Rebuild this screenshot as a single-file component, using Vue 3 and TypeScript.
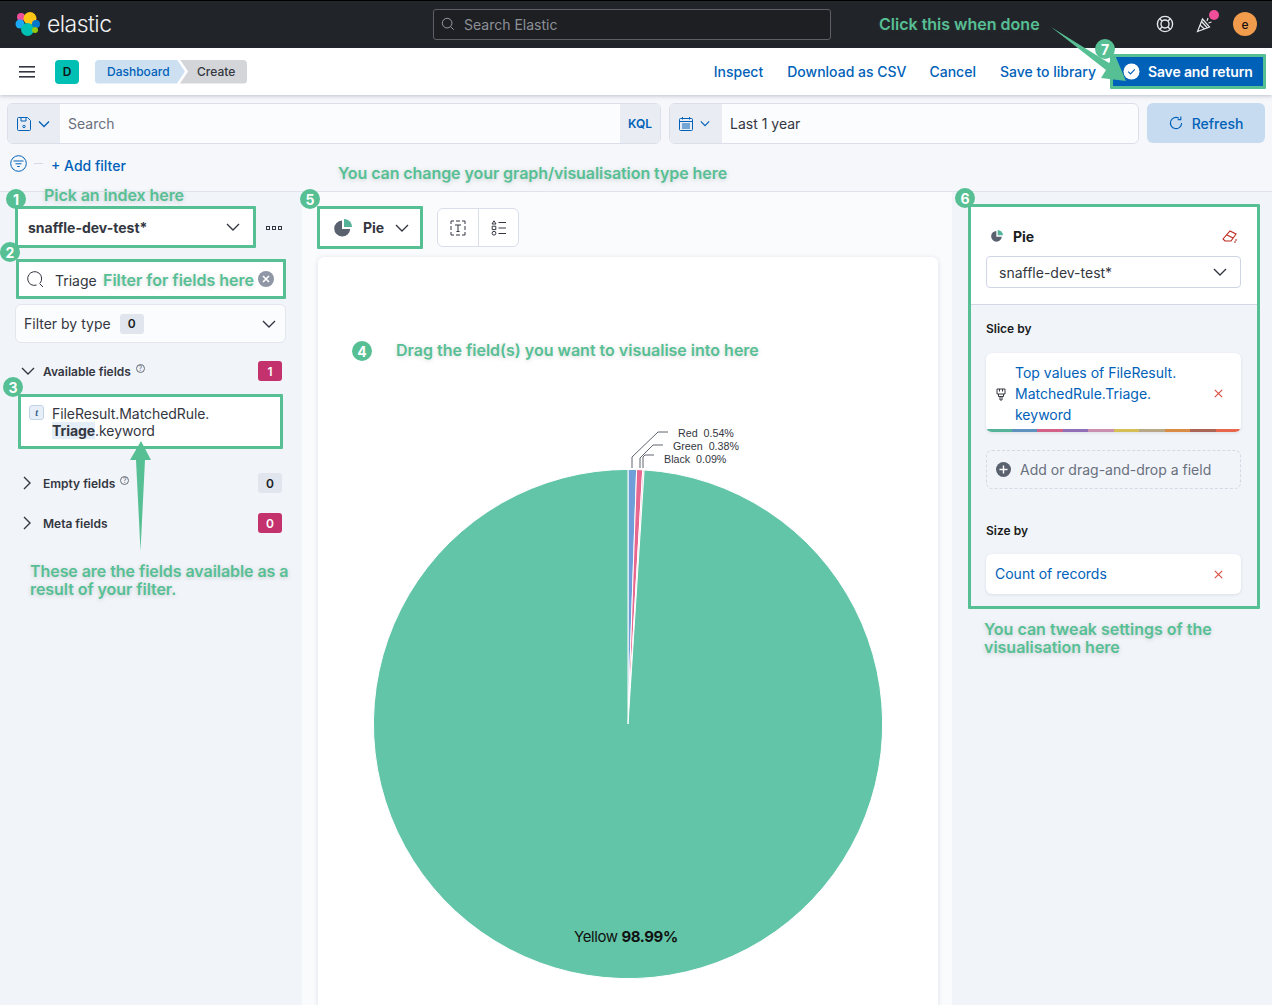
<script setup lang="ts">
interface Slice {
  label: string
  share: number
  color: string
}

interface Badge {
  no: number
  x: number
  y: number
}

// pie data, clockwise from 12 o'clock
const slices: Slice[] = [
  { label: 'Red', share: 0.54, color: '#6f9fd8' },
  { label: 'Green', share: 0.38, color: '#e8678f' },
  { label: 'Black', share: 0.09, color: '#d9a0c0' },
  { label: 'Yellow', share: 98.99, color: '#62c5a7' }
]

const cx = 310
const cy = 467
const r = 254.6

function point(pct: number): string {
  const a = (pct / 100) * Math.PI * 2
  return `${(cx + r * Math.sin(a)).toFixed(2)} ${(cy - r * Math.cos(a)).toFixed(2)}`
}

let run = 0
const arcs = slices.map((s) => {
  const from = run
  run += s.share
  const large = s.share > 50 ? 1 : 0
  return {
    color: s.color,
    d: `M${cx} ${cy} L${point(from)} A${r} ${r} 0 ${large} 1 ${point(run)} Z`
  }
})

const badges: Badge[] = [
  { no: 1, x: 16, y: 199 },
  { no: 2, x: 10, y: 252 },
  { no: 3, x: 13, y: 387 },
  { no: 4, x: 362, y: 351 },
  { no: 5, x: 310, y: 199 },
  { no: 6, x: 965, y: 198 },
  { no: 7, x: 1105, y: 49 }
]

const sliceColors = ['#54b399', '#6092c0', '#d36086', '#9170b8', '#ca8eae', '#d6bf57', '#b9a888', '#da8b45', '#aa6556', '#e7664c']
</script>

<template>
  <div class="page">
    <header class="top">
      <div class="brand">
        <svg width="26" height="26" viewBox="0 0 26 26">
          <circle cx="6" cy="6" r="4" fill="#f04e98" />
          <circle cx="15" cy="7.5" r="6.5" fill="#fec514" />
          <circle cx="5" cy="13" r="4.5" fill="#1ba9f5" />
          <circle cx="21" cy="13" r="4" fill="#0077cc" />
          <circle cx="12.5" cy="18.5" r="6.5" fill="#00bfb3" />
          <circle cx="20" cy="19" r="3" fill="#93c90e" />
        </svg>
        <span class="wordmark">elastic</span>
      </div>
      <div class="global-search">
        <svg width="14" height="14" viewBox="0 0 16 16" fill="none" stroke="#9a9da3" stroke-width="1.1">
          <circle cx="7" cy="7" r="5.5" />
          <path d="M11 11l3.5 3.5" />
        </svg>
        <span>Search Elastic</span>
      </div>
      <div class="top-icons">
        <svg width="18" height="18" viewBox="0 0 18 18" fill="none" stroke="#e6e8ea" stroke-width="1.4">
          <circle cx="9" cy="9" r="7.6" />
          <circle cx="9" cy="9" r="4" />
          <path d="M3.6 3.6l2.6 2.6M14.4 3.6l-2.6 2.6M3.6 14.4l2.6-2.6M14.4 14.4l-2.6-2.6" />
        </svg>
        <div class="news">
          <svg width="18" height="18" viewBox="0 0 18 18" fill="none" stroke="#e6e8ea" stroke-width="1.2">
            <path d="M1.5 16.5L6.5 4l7 8z" />
            <path d="M4 10l4.5 4M5.5 6.5l6 6.5M12 3l-1 3M15.5 7l-3 1" />
          </svg>
          <i class="news-dot"></i>
        </div>
        <span class="avatar">e</span>
      </div>
    </header>

    <nav class="bar">
      <svg class="burger" width="16" height="12" viewBox="0 0 16 12" fill="#343741">
        <rect y="0" width="16" height="1.6" />
        <rect y="5" width="16" height="1.6" />
        <rect y="10" width="16" height="1.6" />
      </svg>
      <span class="space">D</span>
      <div class="crumbs">
        <span class="crumb first">Dashboard</span>
        <span class="crumb last">Create</span>
      </div>
      <div class="bar-links">
        <a>Inspect</a>
        <a>Download as CSV</a>
        <a class="cancel">Cancel</a>
        <a>Save to library</a>
      </div>
      <button class="save marked">
        <svg width="17" height="17" viewBox="0 0 17 17">
          <circle cx="8.5" cy="8.5" r="8" fill="#fff" />
          <path d="M5.2 8.7l2.3 2.3 4.3-4.6" fill="none" stroke="#0061b8" stroke-width="1.1" />
        </svg>
        Save and return
      </button>
    </nav>

    <section class="query">
      <div class="search">
        <div class="saved">
          <svg width="14" height="14" viewBox="0 0 14 14" fill="none" stroke="#0061b8" stroke-width="1">
            <path d="M.5 1.5a1 1 0 011-1h9l3 3v9a1 1 0 01-1 1h-11a1 1 0 01-1-1z" />
            <path d="M4 .5v3.5h5V.5" />
            <circle cx="7" cy="9.5" r="1.2" />
          </svg>
          <svg width="12" height="8" viewBox="0 0 12 8" fill="none" stroke="#0061b8" stroke-width="1.3">
            <path d="M1 1.5l5 5 5-5" />
          </svg>
        </div>
        <span class="search-text">Search</span>
        <span class="kql">KQL</span>
      </div>
      <div class="date">
        <div class="date-pick">
          <svg width="14" height="14" viewBox="0 0 14 14" fill="none" stroke="#0061b8" stroke-width="1">
            <rect x=".5" y="1.5" width="13" height="12" rx="1" />
            <path d="M.5 4.5h13M3.5 0v2.5M10.5 0v2.5M3 7h8M3 9h8M3 11h8" />
          </svg>
          <svg width="10" height="7" viewBox="0 0 12 8" fill="none" stroke="#0061b8" stroke-width="1.4">
            <path d="M1 1.5l5 5 5-5" />
          </svg>
        </div>
        <span class="date-text">Last 1 year</span>
      </div>
      <button class="refresh">
        <svg width="14" height="14" viewBox="0 0 14 14" fill="none" stroke="#0061b8" stroke-width="1.1">
          <path d="M9.8 2.2A5.6 5.6 0 1012.6 7" />
          <path d="M11.8 .6v3H8.8" />
        </svg>
        Refresh
      </button>
    </section>

    <section class="filters">
      <svg width="17" height="17" viewBox="0 0 17 17" fill="none" stroke="#0061b8" stroke-width="1">
        <circle cx="8.5" cy="8.5" r="7.8" />
        <path d="M3.5 6h10M5.5 8.8h6M7.2 11.5h2.6" />
      </svg>
      <i class="filter-dash"></i>
      <a class="add-filter">+ Add filter</a>
    </section>

    <main class="work">
      <aside class="fields">
        <div class="index marked">
          <b>snaffle-dev-test*</b>
          <svg width="14" height="8" viewBox="0 0 14 8" fill="none" stroke="#343741" stroke-width="1.4">
            <path d="M1 1l6 6 6-6" />
          </svg>
          <span class="dots"><i></i><i></i><i></i></span>
        </div>
        <div class="field-search marked">
          <svg width="18" height="18" viewBox="0 0 18 18" fill="none" stroke="#343741" stroke-width="1">
            <path d="M14 13.2A7 7 0 105 14.6a7 7 0 005.6.4" />
            <path d="M13.5 13.5l3.5 3.5" />
          </svg>
          <span class="typed">Triage</span>
          <span class="clear">
            <svg width="8" height="8" viewBox="0 0 8 8" stroke="#fff" stroke-width="1.6"><path d="M1 1l6 6M7 1L1 7" /></svg>
          </span>
        </div>
        <div class="type-filter">
          <span>Filter by type</span>
          <span class="count grey wide">0</span>
          <svg width="14" height="8" viewBox="0 0 14 8" fill="none" stroke="#343741" stroke-width="1.4">
            <path d="M1 1l6 6 6-6" />
          </svg>
        </div>
        <div class="group available">
          <svg width="14" height="8" viewBox="0 0 14 8" fill="none" stroke="#343741" stroke-width="1.4">
            <path d="M1 1l6 6 6-6" />
          </svg>
          <b>Available fields</b>
          <span class="help">?</span>
          <span class="count pink">1</span>
        </div>
        <div class="field marked">
          <span class="token">t</span>
          <span class="field-name">FileResult.MatchedRule.<br /><mark>Triage</mark>.keyword</span>
        </div>
        <div class="group empty">
          <svg width="8" height="14" viewBox="0 0 8 14" fill="none" stroke="#343741" stroke-width="1.4">
            <path d="M1 1l6 6-6 6" />
          </svg>
          <b>Empty fields</b>
          <span class="help">?</span>
          <span class="count grey">0</span>
        </div>
        <div class="group meta">
          <svg width="8" height="14" viewBox="0 0 8 14" fill="none" stroke="#343741" stroke-width="1.4">
            <path d="M1 1l6 6-6 6" />
          </svg>
          <b>Meta fields</b>
          <span class="count pink">0</span>
        </div>
      </aside>

      <section class="center">
        <div class="tools">
          <div class="chart-type marked">
            <svg width="18" height="18" viewBox="0 0 18 18">
              <path d="M8 1.5a8 8 0 108.2 8.5H8z" fill="#5a6270" />
              <path d="M10 0a8 8 0 018 8h-8z" fill="#54b399" />
            </svg>
            <b>Pie</b>
            <svg width="14" height="8" viewBox="0 0 14 8" fill="none" stroke="#343741" stroke-width="1.4">
              <path d="M1 1l6 6 6-6" />
            </svg>
          </div>
          <div class="tool-group">
            <span class="tool">
              <svg width="16" height="16" viewBox="0 0 16 16" fill="none" stroke="#343741" stroke-width="1">
                <path d="M1 4V1h3M6 1h4M12 1h3v3M15 6v4M15 12v3h-3M10 15H6M4 15H1v-3M1 10V6" />
                <path d="M5 5h6M8 5v6.5M6.5 11.5h3" />
              </svg>
            </span>
            <span class="tool">
              <svg width="16" height="16" viewBox="0 0 16 16" fill="none" stroke="#343741" stroke-width="1">
                <path d="M3 .8L5 4H1zM1.2 6.2h3.6v3.4H1.2z" />
                <circle cx="3" cy="13.2" r="1.9" />
                <path d="M7.5 2.5H15M7.5 8H15M7.5 13.5H15" />
              </svg>
            </span>
          </div>
        </div>
        <div class="canvas">
          <svg class="chart" width="620" height="748" viewBox="0 0 620 748">
            <path v-for="a in arcs" :key="a.color" :d="a.d" :fill="a.color" stroke="#fff" stroke-width="1" />
            <g fill="none" stroke="#5f6670" stroke-width="1">
              <path d="M314 211v-11l26-25h10" />
              <path d="M322 211v-10l13-13h10" />
              <path d="M325 211v-11l2-2h9" />
            </g>
            <g class="leader">
              <text x="360" y="180">Red&#160;&#160;0.54%</text>
              <text x="355" y="193">Green&#160;&#160;0.38%</text>
              <text x="346" y="206">Black&#160;&#160;0.09%</text>
            </g>
            <text class="big" x="256" y="685">Yellow <tspan font-weight="700">98.99%</tspan></text>
          </svg>
        </div>
      </section>

      <aside class="config">
        <div class="panel marked">
          <div class="panel-head">
            <div class="panel-title">
              <svg width="12" height="12" viewBox="0 0 18 18">
                <path d="M8 1.5a8 8 0 108.2 8.5H8z" fill="#5a6270" />
                <path d="M10 0a8 8 0 018 8h-8z" fill="#54b399" />
              </svg>
              <b>Pie</b>
              <svg class="eraser" width="16" height="14" viewBox="0 0 16 14" fill="none" stroke="#bd271e" stroke-width="1.1">
                <path d="M1 10l7-8 6 3-5 7H3z" />
                <path d="M5 6l6 3M13 11h2M12 13h2" />
              </svg>
            </div>
            <div class="panel-select">
              <span>snaffle-dev-test*</span>
              <svg width="14" height="8" viewBox="0 0 14 8" fill="none" stroke="#343741" stroke-width="1.4">
                <path d="M1 1l6 6 6-6" />
              </svg>
            </div>
          </div>
          <div class="panel-body">
            <div class="dim-label">Slice by</div>
            <div class="dim-card slice">
              <svg class="handle" width="10" height="13" viewBox="0 0 10 13" fill="none" stroke="#343741" stroke-width="1">
                <path d="M1 1h8v5H1zM3.5 1v2.5M6.5 1v2.5M2.5 6v2.5h5V6M4 8.5V12h2V8.5" />
              </svg>
              <a class="dim-text">Top values of FileResult.<br />MatchedRule.Triage.<br />keyword</a>
              <span class="remove">
                <svg width="9" height="9" viewBox="0 0 9 9" stroke="#d8493f" stroke-width="1.1"><path d="M.8.8l7.4 7.4M8.2.8L.8 8.2" /></svg>
              </span>
              <div class="palette">
                <i v-for="c in sliceColors" :key="c" :style="{ background: c }"></i>
              </div>
            </div>
            <div class="add-field">
              <svg width="15" height="15" viewBox="0 0 15 15">
                <circle cx="7.5" cy="7.5" r="7.5" fill="#5a6270" />
                <path d="M7.5 3.5v8M3.5 7.5h8" stroke="#fff" stroke-width="1.4" />
              </svg>
              <span>Add or drag-and-drop a field</span>
            </div>
            <div class="dim-label size">Size by</div>
            <div class="dim-card count-card">
              <a class="dim-text">Count of records</a>
              <span class="remove">
                <svg width="9" height="9" viewBox="0 0 9 9" stroke="#d8493f" stroke-width="1.1"><path d="M.8.8l7.4 7.4M8.2.8L.8 8.2" /></svg>
              </span>
            </div>
          </div>
        </div>
      </aside>
    </main>

    <!-- green tutorial marks lying over the screenshot -->
    <svg class="arrows" width="1272" height="1005" viewBox="0 0 1272 1005">
      <path d="M1051 27L1109 63 1115 55 1126 81 1101 78 1106 70Z" />
      <path d="M141 441L151 460 145 460 140.5 551 136 460 130 460Z" />
    </svg>
    <span v-for="b in badges" :key="b.no" class="badge" :style="{ left: b.x - 10 + 'px', top: b.y - 10 + 'px' }">{{ b.no }}</span>
    <p class="note n-done">Click this when done</p>
    <p class="note n-type">You can change your graph/visualisation type here</p>
    <p class="note n-index">Pick an index here</p>
    <p class="note n-filter">Filter for fields here</p>
    <p class="note n-drag">Drag the field(s) you want to visualise into here</p>
    <p class="note n-avail">These are the fields available as a<br />result of your filter.</p>
    <p class="note n-tweak">You can tweak settings of the<br />visualisation here</p>
  </div>
</template>

<style>
html,
body {
  margin: 0;
  background: #f5f7fa;
}
</style>

<style scoped>
* {
  box-sizing: border-box;
}

.page {
  position: relative;
  width: 1272px;
  height: 1005px;
  overflow: hidden;
  background: #f5f7fa;
  color: #343741;
  font-family: Inter, 'Liberation Sans', sans-serif;
  font-size: 14px;
}

.marked {
  border: 3px solid #57bf94 !important;
  border-radius: 1px !important;
}

.top {
  display: flex;
  align-items: center;
  height: 48px;
  padding: 0 15px 1px;
  background: #212429;
  border-top: 1px solid #000;
}

.brand {
  display: flex;
  align-items: center;
  gap: 6px;
  width: 418px;
}

.wordmark {
  color: #f0f1f2;
  font-size: 23px;
  font-weight: 300;
  letter-spacing: -0.55px;
}

.global-search {
  display: flex;
  align-items: center;
  gap: 9px;
  width: 398px;
  height: 31px;
  padding-left: 7px;
  background: #1d1f23;
  border: 1px solid #5c6066;
  border-radius: 3px;
  color: #8d9096;
}

.top-icons {
  display: flex;
  align-items: center;
  margin-left: auto;
  gap: 22px;
}

.news {
  position: relative;
  height: 18px;
  margin-right: -3px;
}

.news-dot {
  position: absolute;
  top: -5px;
  right: -5px;
  width: 10px;
  height: 10px;
  border-radius: 50%;
  background: #f04e98;
}

.avatar {
  display: flex;
  align-items: center;
  justify-content: center;
  width: 24px;
  height: 24px;
  border-radius: 50%;
  background: #f19b4d;
  color: #111;
  font-size: 12px;
  font-weight: 500;
}

.bar {
  position: relative;
  display: flex;
  align-items: center;
  height: 47px;
  padding: 0 6px 0 19px;
  background: #fff;
  box-shadow: 0 1px 4px rgba(60, 70, 100, 0.3);
}

.space {
  display: flex;
  align-items: center;
  justify-content: center;
  width: 24px;
  height: 24px;
  margin-left: 20px;
  background: #00bfb3;
  border-radius: 4px;
  color: #111;
  font-size: 12px;
  font-weight: 600;
}

.crumbs {
  display: flex;
  margin-left: 16px;
  font-size: 12px;
  font-weight: 500;
}

.crumb {
  display: flex;
  align-items: center;
  height: 24px;
}

.crumb.first {
  width: 90px;
  padding-left: 12px;
  background: #cce0f2;
  border-radius: 4px 0 0 4px;
  color: #0061b8;
  clip-path: polygon(0 0, 91% 0, 100% 50%, 91% 100%, 0 100%);
}

.crumb.last {
  width: 67px;
  margin-left: -5px;
  padding-left: 17px;
  background: #d3d5d8;
  border-radius: 0 4px 4px 0;
  clip-path: polygon(0 0, 100% 0, 100% 100%, 0 100%, 12% 50%);
}

.bar-links {
  display: flex;
  gap: 24px;
  margin-left: auto;
  color: #0061b8;
  font-weight: 500;
}

.cancel {
  margin-left: -1px;
}

.save {
  display: flex;
  align-items: center;
  gap: 8px;
  width: 156px;
  height: 35px;
  margin-left: 14px;
  padding: 0 0 0 10px;
  background: #0061b8;
  color: #fff;
  font: 600 14px Inter, sans-serif;
  letter-spacing: -0.15px;
}

.query {
  display: flex;
  gap: 8px;
  padding: 8px 7px 0;
}

.search {
  display: flex;
  align-items: center;
  width: 654px;
  height: 41px;
  background: #fbfcfe;
  border: 1px solid #dcdfea;
  border-radius: 6px;
  overflow: hidden;
}

.saved {
  display: flex;
  align-items: center;
  gap: 7px;
  width: 52px;
  height: 100%;
  padding-left: 9px;
  background: #e9edf3;
}

.search-text {
  flex: 1;
  padding-left: 8px;
  color: #69707d;
}

.kql {
  display: flex;
  align-items: center;
  justify-content: center;
  width: 40px;
  height: 100%;
  background: #e9edf3;
  color: #0061b8;
  font-size: 12px;
  font-weight: 600;
}

.date {
  display: flex;
  align-items: center;
  width: 470px;
  height: 41px;
  background: #fbfcfe;
  border: 1px solid #dcdfea;
  border-radius: 6px;
  overflow: hidden;
}

.date-pick {
  display: flex;
  align-items: center;
  gap: 7px;
  width: 52px;
  height: 100%;
  padding-left: 9px;
  background: #e9edf3;
}

.date-text {
  padding-left: 8px;
}

.refresh {
  display: flex;
  align-items: center;
  justify-content: center;
  gap: 9px;
  width: 118px;
  height: 40px;
  background: #c6dbef;
  border: none;
  border-radius: 6px;
  color: #0061b8;
  font: 500 14px Inter, sans-serif;
}

.filters {
  display: flex;
  align-items: flex-start;
  height: 48px;
  padding: 11px 0 0 10px;
  border-bottom: 1px solid #dfe3ec;
}

.filter-dash {
  width: 9px;
  height: 1px;
  margin: 8px 0 0 7px;
  background: #d3dae6;
}

.add-filter {
  margin: 2px 0 0 8px;
  color: #0061b8;
  font-weight: 500;
}

.work {
  display: grid;
  grid-template-columns: 302px 650px 320px;
  height: 814px;
}

.fields {
  position: relative;
  padding: 14px 0 0 15px;
  background: #f1f4f9;
}

.index {
  position: relative;
  display: flex;
  align-items: center;
  justify-content: space-between;
  width: 241px;
  height: 42px;
  padding: 0 13px 0 10px;
  background: #fff;
  color: #343741;
}

.dots {
  position: absolute;
  left: 248px;
  top: 17px;
  display: flex;
  gap: 2px;
}

.dots i {
  width: 4px;
  height: 4px;
  border: 1px solid #343741;
}

.field-search {
  display: flex;
  align-items: center;
  width: 270px;
  height: 40px;
  margin: 11px 0 0 1px;
  padding: 0 9px 0 7px;
  background: #fff;
}

.typed {
  margin-left: 11px;
  margin-top: 2px;
}

.clear {
  display: flex;
  align-items: center;
  justify-content: center;
  width: 16px;
  height: 16px;
  margin-left: auto;
  border-radius: 50%;
  background: #8f96a6;
}

.type-filter {
  display: flex;
  align-items: center;
  width: 271px;
  height: 39px;
  margin-top: 5px;
  padding: 0 9px 0 8px;
  background: #fbfcfe;
  border: 1px solid #e3e6ef;
  border-radius: 6px;
}

.type-filter svg {
  margin-left: auto;
}

.count {
  display: flex;
  align-items: center;
  justify-content: center;
  width: 24px;
  height: 20px;
  margin-left: auto;
  border-radius: 3px;
  font-size: 12px;
  font-weight: 600;
}

.count.wide {
  margin-left: 9px;
}

.count.grey {
  background: #e0e5ee;
  color: #1a1c21;
}

.count.pink {
  background: #c4326e;
  color: #fff;
}

.group {
  display: flex;
  align-items: center;
  height: 20px;
  padding: 0 4px 0 6px;
  width: 271px;
  font-size: 12px;
}

.group b {
  margin-left: 8px;
  font-weight: 600;
}

.group.available {
  margin-top: 18px;
}

.group.empty,
.group.meta {
  padding-left: 8px;
}

.group.empty b,
.group.meta b {
  margin-left: 12px;
}

.group.empty {
  margin-top: 24px;
}

.group.meta {
  margin-top: 20px;
}

.help {
  display: flex;
  align-items: center;
  justify-content: center;
  width: 9px;
  height: 9px;
  margin: -6px 0 0 5px;
  border: 1px solid #69707d;
  border-radius: 50%;
  color: #69707d;
  font-size: 7px;
}

.field {
  display: flex;
  width: 265px;
  height: 55px;
  margin: 13px 0 0 3px;
  padding: 8px 0 0 8px;
  background: #fff;
  line-height: 17px;
  letter-spacing: -0.07px;
}

.token {
  display: flex;
  align-items: center;
  justify-content: center;
  width: 15px;
  height: 15px;
  margin-right: 8px;
  background: #e6eef7;
  border: 1px solid #c3d3e6;
  border-radius: 3px;
  color: #36618f;
  font: italic 700 10px 'Liberation Serif', serif;
}

.field-name mark {
  background: #e4eef8;
  color: #343741;
  font-weight: 700;
}

.center {
  padding: 14px 14px 0 16px;
  background: #fafbfd;
}

.tools {
  display: flex;
  align-items: center;
  gap: 14px;
  height: 43px;
}

.chart-type {
  display: flex;
  align-items: center;
  gap: 9px;
  width: 106px;
  height: 43px;
  margin-left: -1px;
  padding-left: 14px;
  background: #fff;
}

.chart-type b {
  margin: 0 2px;
}

.tool-group {
  display: flex;
  height: 39px;
  background: #fff;
  border: 1px solid #d9deea;
  border-radius: 6px;
}

.tool {
  display: flex;
  align-items: center;
  justify-content: center;
  width: 40px;
}

.tool + .tool {
  border-left: 1px solid #d9deea;
}

.canvas {
  height: 748px;
  margin-top: 8px;
  background: #fff;
  border-radius: 6px 6px 0 0;
  box-shadow: 0 1px 5px rgba(90, 100, 130, 0.2);
}

.chart {
  display: block;
}

.leader text {
  fill: #343741;
  font-family: 'Liberation Sans', sans-serif;
  font-size: 10.7px;
}

.big {
  fill: #111;
  font-size: 15px;
  letter-spacing: -0.4px;
}

.config {
  padding: 12px 0 0 16px;
  background: #f1f4f9;
}

.panel {
  width: 292px;
  height: 405px;
  background: #f1f4f9;
}

.panel-head {
  height: 98px;
  padding: 19px 16px 0 15px;
  background: #fff;
  border-bottom: 1px solid #d3dae6;
}

.panel-title {
  display: flex;
  align-items: center;
  gap: 10px;
  height: 20px;
  padding: 0 3px 0 5px;
  color: #1a1c21;
}

.eraser {
  margin-left: auto;
}

.panel-select {
  display: flex;
  align-items: center;
  justify-content: space-between;
  height: 32px;
  margin-top: 10px;
  padding: 0 13px 0 12px;
  background: #fff;
  border: 1px solid #cfd5e5;
  border-radius: 4px;
}

.panel-body {
  padding: 0 16px 0 15px;
}

.dim-label {
  height: 48px;
  padding-top: 16px;
  color: #1a1c21;
  font-size: 12px;
  font-weight: 600;
}

.dim-label.size {
  height: 65px;
  padding-top: 34px;
}

.dim-card {
  position: relative;
  display: flex;
  align-items: center;
  background: #fff;
  border-radius: 6px;
  box-shadow: 0 1px 3px rgba(90, 100, 130, 0.15);
}

.dim-card.slice {
  height: 79px;
  padding: 0 10px;
  overflow: hidden;
}

.dim-card.count-card {
  height: 40px;
  padding: 0 0 1px 9px;
}

.dim-text {
  color: #0061b8;
  line-height: 21px;
}

.slice .handle {
  margin-top: 4px;
}

.slice .dim-text {
  margin: 2px 0 0 9px;
  line-height: 21px;
}

.remove {
  position: absolute;
  right: 18px;
  top: 50%;
  margin-top: -5px;
  line-height: 9px;
}

.slice .remove {
  margin-top: -5px;
}

.palette {
  position: absolute;
  left: 0;
  right: 0;
  bottom: 0;
  display: flex;
  height: 3px;
}

.palette i {
  flex: 1;
}

.add-field {
  display: flex;
  align-items: center;
  gap: 9px;
  height: 39px;
  margin-top: 18px;
  padding-left: 9px;
  border: 1px dashed #d3dae6;
  border-radius: 6px;
  color: #69707d;
}

.arrows {
  position: absolute;
  left: 0;
  top: 0;
  fill: #57bf94;
  pointer-events: none;
}

.badge {
  position: absolute;
  display: flex;
  align-items: center;
  justify-content: center;
  width: 20px;
  height: 20px;
  border-radius: 50%;
  background: #57bf94;
  color: #fff;
  font-size: 14px;
  font-weight: 700;
}

.note {
  position: absolute;
  margin: 0;
  color: #57bf94;
  font-size: 16px;
  font-weight: 600;
  line-height: 18px;
  white-space: nowrap;
  text-shadow: 0 1px 4px rgba(80, 100, 90, 0.25);
}

.n-done {
  left: 879px;
  top: 15px;
}

.n-type {
  left: 338px;
  top: 164px;
  letter-spacing: -0.07px;
}

.n-index {
  left: 44px;
  top: 186px;
  letter-spacing: -0.05px;
}

.n-filter {
  left: 103px;
  top: 271px;
}

.n-drag {
  left: 396px;
  top: 341px;
}

.n-avail {
  left: 30px;
  top: 562px;
  letter-spacing: -0.06px;
}

.n-tweak {
  left: 984px;
  top: 620px;
}
</style>
